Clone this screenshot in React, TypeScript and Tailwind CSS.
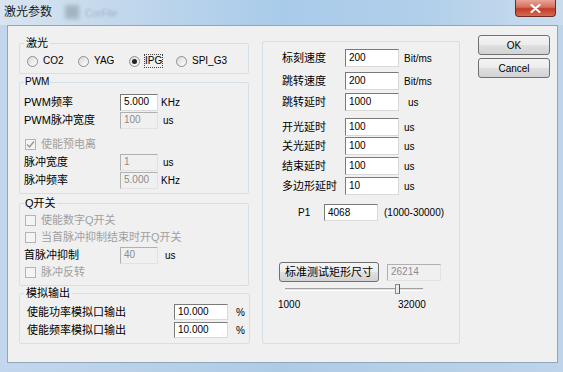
import React from "react";

const font = "font-['Liberation_Sans','Noto_Sans_CJK_SC',sans-serif]";

function Box({ value, className = "", disabled = false }: { value: string; className?: string; disabled?: boolean }) {
  return (
    <div
      className={`flex shrink-0 items-center border pl-[3px] text-[10px] leading-none ${
        disabled
          ? "border-t-[#b0b0b0] border-l-[#b0b0b0] border-r-[#e2e2e2] border-b-[#e2e2e2] bg-[#f0f0f0] text-[#8c8c8c]"
          : "border-t-[#7a7a7a] border-l-[#7a7a7a] border-r-[#d9d9d9] border-b-[#d9d9d9] bg-white text-black"
      } ${className}`}
    >
      {value}
    </div>
  );
}

function Radio({ label, checked = false, focus = false, className = "" }: { label: string; checked?: boolean; focus?: boolean; className?: string }) {
  return (
    <div className={`flex items-center ${className}`}>
      <span className="flex h-[11px] w-[11px] items-center justify-center rounded-full border border-[#8e8f8f] bg-[linear-gradient(135deg,#d8d8d8,#ffffff)]">
        {checked && <span className="h-[5px] w-[5px] rounded-full bg-[#222]" />}
      </span>
      <span className={`ml-[5px] text-[10px] leading-[12px] ${focus ? "outline outline-1 outline-dotted outline-[#444]" : ""}`}>{label}</span>
    </div>
  );
}

function Check({ label, checked = false }: { label: string; checked?: boolean }) {
  return (
    <div className="ml-[1px] flex h-[17px] items-center text-[#a0a0a0]">
      <span className="flex h-[11px] w-[11px] items-center justify-center border border-[#b4b4b4] bg-[#f4f4f4]">
        {checked && (
          <svg width="9" height="9" viewBox="0 0 9 9">
            <path d="M1 4.5 L3.5 7 L8 1.5" fill="none" stroke="#9a9a9a" strokeWidth="1.5" />
          </svg>
        )}
      </span>
      <span className="ml-[5px] text-[11px]">{label}</span>
    </div>
  );
}

function Row({ label, value, unit, disabled = false, labelW = "w-[96px]", unitCls = "ml-[3px]" }: { label: string; value: string; unit: string; disabled?: boolean; labelW?: string; unitCls?: string }) {
  return (
    <div className="flex h-[18px] items-center">
      <span className={`${labelW} text-[11px]`}>{label}</span>
      <Box value={value} disabled={disabled} className="h-[17px] w-[38px]" />
      <span className={`${unitCls} text-[10px]`}>{unit}</span>
    </div>
  );
}

function RRow({ label, value, unit, unitCls = "ml-[5px]", className = "" }: { label: string; value: string; unit: string; unitCls?: string; className?: string }) {
  return (
    <div className={`ml-[19px] flex h-[18px] items-center ${className}`}>
      <span className="w-[63px] text-[11px]">{label}</span>
      <Box value={value} className="h-[18px] w-[54px]" />
      <span className={`${unitCls} text-[10px]`}>{unit}</span>
    </div>
  );
}

const btn =
  "flex items-center justify-center rounded-[3px] border border-[#707070] bg-[linear-gradient(#f4f4f4_0%,#ececec_50%,#e0e0e0_50%,#d2d2d2_100%)] text-[10px]";

export default function App() {
  return (
    <div className={`${font} flex h-[372px] w-[563px] flex-col overflow-hidden bg-[linear-gradient(90deg,#c2d7ec,#aecbe6_50%,#bdd4ea)] text-black`}>
      {/* Title bar */}
      <div className="relative flex h-[25px] shrink-0 items-start bg-[linear-gradient(90deg,#d9e5f0_0%,#c3d8ec_20%,#a9cbea_50%,#b1cfea_75%,#c9dcee_100%)]">
        <span className="ml-[4px] mt-[5px] text-[12px] leading-[14px] text-[#1a1a1a]">激光参数</span>
        <span className="ml-[13px] mt-[5px] h-[14px] w-[14px] bg-[#7d8c99] opacity-50 blur-[2px]" />
        <span className="ml-[6px] mt-[6px] text-[10px] text-[#7b8a99] opacity-50 blur-[1px]">CorFile</span>
        <div className="ml-auto mr-[7px] flex h-[17px] w-[41px] items-center justify-center rounded-b-[4px] border border-t-0 border-[#6f2a22] bg-[linear-gradient(#e7a497_0%,#d66f5c_45%,#c23b25_55%,#d86a50_100%)]">
          <svg width="11" height="9" viewBox="0 0 11 9">
            <path d="M1.5 1 L9.5 8 M9.5 1 L1.5 8" stroke="#fff" strokeWidth="2.2" strokeLinecap="round" />
          </svg>
        </div>
      </div>

      {/* Client */}
      <div className="ml-[7px] flex h-[338px] w-[551px] shrink-0 border border-[#8fa6bc] bg-[#f0f0f0] pl-[11px]">
        {/* Left column */}
        <div className="flex w-[230px] flex-col">
          <fieldset className="mt-[10px] h-[38px] rounded-[2px] border border-[#d5dfe5] px-[4px]">
            <legend className="px-[2px] text-[11px] leading-[14px]">激光</legend>
            <div className="ml-[3px] mt-[2px] flex h-[18px] items-center">
              <Radio label="CO2" className="w-[51px]" />
              <Radio label="YAG" className="w-[51px]" />
              <Radio label="IPG" checked focus className="w-[47px]" />
              <Radio label="SPI_G3" />
            </div>
          </fieldset>

          <fieldset className="mt-[1px] h-[119px] rounded-[2px] border border-[#d5dfe5] px-[4px]">
            <legend className="px-[1px] text-[10px] leading-[14px]">PWM</legend>
            <div className="mt-[4px]">
              <Row label="PWM频率" value="5.000" unit="KHz" />
              <Row label="PWM脉冲宽度" value="100" unit="us" disabled unitCls="ml-[5px]" />
            </div>
            <div className="mt-[7px]">
              <Check label="使能预电离" checked />
            </div>
            <Row label="脉冲宽度" value="1" unit="us" disabled unitCls="ml-[5px]" />
            <Row label="脉冲频率" value="5.000" unit="KHz" disabled />
          </fieldset>

          <fieldset className="mt-[2px] h-[90px] rounded-[2px] border border-[#d5dfe5] px-[4px]">
            <legend className="px-[1px] text-[11px] leading-[14px]">Q开关</legend>
            <div className="mt-[2px]">
              <Check label="使能数字Q开关" />
              <Check label="当首脉冲抑制结束时开Q开关" />
            </div>
            <Row label="首脉冲抑制" value="40" unit="us" disabled unitCls="ml-[7px]" />
            <Check label="脉冲反转" />
          </fieldset>

          <fieldset className="h-[58px] rounded-[2px] border border-[#d5dfe5] px-[4px]">
            <legend className="px-[2px] text-[11px] leading-[14px]">模拟输出</legend>
            <div className="mt-[3px]">
              {["使能功率模拟口输出", "使能频率模拟口输出"].map((l) => (
                <div key={l} className="ml-[3px] flex h-[18px] items-center">
                  <span className="w-[147px] text-[11px]">{l}</span>
                  <Box value="10.000" className="h-[16px] w-[54px]" />
                  <span className="ml-[8px] text-[10px]">%</span>
                </div>
              ))}
            </div>
          </fieldset>
        </div>

        {/* Right group */}
        <div className="ml-[13px] mt-[15px] flex h-[303px] w-[198px] flex-col rounded-[2px] border border-[#d5dfe5]">
          <RRow label="标刻速度" value="200" unit="Bit/ms" className="mt-[7px]" />
          <RRow label="跳转速度" value="200" unit="Bit/ms" className="mt-[5px]" />
          <RRow label="跳转延时" value="1000" unit="us" unitCls="ml-[9px]" className="mt-[3px]" />
          <RRow label="开光延时" value="100" unit="us" className="mt-[7px]" />
          <RRow label="关光延时" value="100" unit="us" className="mt-[1px]" />
          <RRow label="结束延时" value="100" unit="us" className="mt-[2px]" />
          <RRow label="多边形延时" value="10" unit="us" className="mt-[2px]" />

          <div className="ml-[35px] mt-[9px] flex h-[17px] items-center">
            <span className="w-[26px] text-[10px]">P1</span>
            <Box value="4068" className="h-[17px] w-[54px]" />
            <span className="ml-[6px] text-[10px]">(1000-30000)</span>
          </div>

          <div className="ml-[16px] mt-[41px] flex h-[20px] items-center">
            <div className={`${btn} h-[20px] w-[100px] text-[11px]`}>标准测试矩形尺寸</div>
            <Box value="26214" disabled className="ml-[8px] h-[17px] w-[54px]" />
          </div>

          <div className="relative ml-[22px] mt-[1px] flex h-[12px] w-[138px] items-center">
            <div className="h-[3px] w-full border-t border-t-[#a0a0a0] border-b border-b-white bg-[#e3e3e3]" />
            <div className="absolute left-[110px] top-[1px] h-[10px] w-[5px] border border-[#8a8a8a] border-r-[#5a5a5a] bg-[#ececec]" />
          </div>

          <div className="ml-[15px] mt-[3px] flex h-[13px] items-center text-[10px]">
            <span className="w-[120px]">1000</span>
            <span>32000</span>
          </div>
        </div>

        {/* Buttons */}
        <div className="ml-[18px] flex w-[72px] flex-col">
          <div className={`${btn} mt-[9px] h-[20px] border-[#3c3c3c]`}>OK</div>
          <div className={`${btn} mt-[3px] h-[20px]`}>Cancel</div>
        </div>
      </div>
    </div>
  );
}
